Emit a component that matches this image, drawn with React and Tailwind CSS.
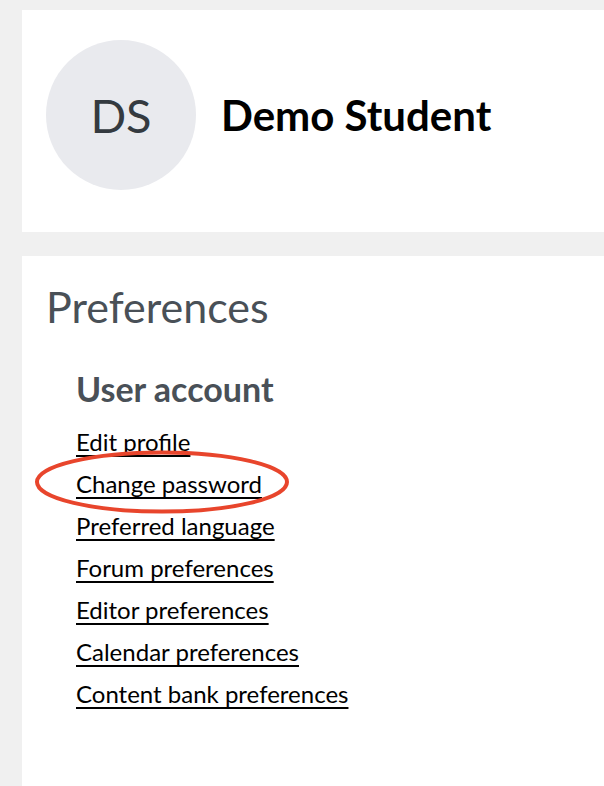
import React from "react";

const links = [
  "Edit profile",
  "Change password",
  "Preferred language",
  "Forum preferences",
  "Editor preferences",
  "Calendar preferences",
  "Content bank preferences",
];

export default function App() {
  return (
    <div
      className="min-h-[786px] bg-[#f0f0f0] pt-[10px] pl-[22px]"
      style={{ fontFamily: "Lato, 'Open Sans', sans-serif" }}
    >
      <div className="flex items-center bg-white pl-[24px] pt-[30px] pb-[42px]">
        <div className="flex h-[150px] w-[150px] items-center justify-center rounded-full bg-[#e9eaee] text-[47px] text-[#343a40]">
          DS
        </div>
        <div className="ml-[25px] text-[42px] font-bold text-black">Demo Student</div>
      </div>
      <div className="mt-[24px] h-[530px] bg-white pl-[24px] pt-[25px]">
        <h2 className="text-[43px] leading-[1.2] text-[#495057]">Preferences</h2>
        <div className="mt-[36px] pl-[30px]">
          <h3 className="text-[34px] font-bold leading-[1.2] text-[#495057]">User account</h3>
          <ul className="mt-[12px]">
            {links.map((l) => (
              <li key={l} className="relative h-[42px] text-[24px] leading-[42px]">
                <a href="#" className="text-black underline underline-offset-[4px]">
                  {l}
                </a>
                {l === "Change password" && (
                  <svg
                    className="pointer-events-none absolute left-[-42px] top-[-14px]"
                    width="258"
                    height="66"
                    viewBox="0 0 258 66"
                  >
                    <ellipse
                      cx="128"
                      cy="33"
                      rx="125"
                      ry="29.5"
                      fill="none"
                      stroke="#e8452c"
                      strokeWidth="4"
                    />
                  </svg>
                )}
              </li>
            ))}
          </ul>
        </div>
      </div>
    </div>
  );
}
